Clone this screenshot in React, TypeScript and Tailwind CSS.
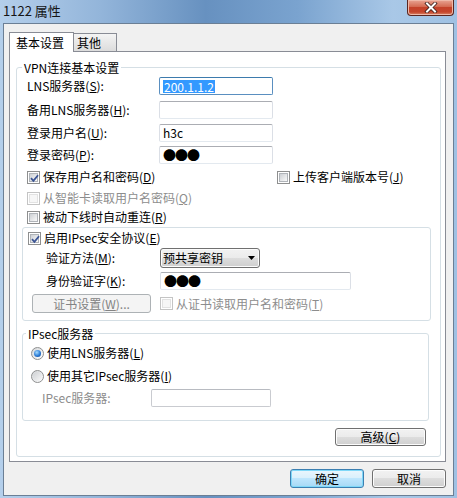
import type { ReactNode } from 'react';

const Check = ({ on = false, off = false }: { on?: boolean; off?: boolean }) => (
  <span
    className={`relative flex h-[13px] w-[13px] shrink-0 items-center justify-center border bg-white ${
      off ? 'border-[#c4c4c4]' : 'border-[#8e8f8f]'
    }`}
  >
    <span
      className={`h-[9px] w-[9px] border ${
        off
          ? 'border-[#e2e2e2] bg-[#f6f6f6]'
          : 'border-[#b0b4b9] bg-gradient-to-br from-[#cdd0d4] to-[#fafafa]'
      }`}
    />
    {on && (
      <svg className="absolute left-[1px] top-[1px]" width="11" height="11" viewBox="0 0 11 11">
        <path d="M2 5.2 L4.4 7.8 L9 2.2" fill="none" stroke="#3b5494" strokeWidth="1.8" />
      </svg>
    )}
  </span>
);

const Radio = ({ on = false }: { on?: boolean }) => (
  <span className="flex h-[13px] w-[13px] shrink-0 items-center justify-center rounded-full border border-[#8e8f8f] bg-gradient-to-br from-[#d4d6d9] to-white">
    {on ? (
      <span className="h-[7px] w-[7px] rounded-full bg-[radial-gradient(circle_at_40%_35%,#a6dcff,#2a7bd6_55%,#0d3f8c)]" />
    ) : (
      <span className="h-[9px] w-[9px] rounded-full bg-gradient-to-br from-[#cfd1d4] to-[#f8f8f8]" />
    )}
  </span>
);

const Field = ({ w, focus = false, off = false, children }: { w: string; focus?: boolean; off?: boolean; children?: ReactNode }) => (
  <div
    className={`${w} flex h-[18px] items-center rounded-[2px] border pl-[3px] ${
      focus
        ? 'border-[#5a8fc0] border-t-[#3d7bad] bg-white'
        : off
          ? 'border-[#c9cbd0] border-t-[#b8bbc1] bg-white'
          : 'border-[#dbdfe6] border-t-[#abadb3] border-b-[#e3e9ef] bg-white'
    }`}
  >
    {children}
  </div>
);

const Dots = () => <span className="text-[13px] leading-[16px] tracking-[-1px] text-black">●●●</span>;

const Btn = ({ w, off = false, main = false, children }: { w: string; off?: boolean; main?: boolean; children: ReactNode }) => (
  <div
    className={`${w} flex items-center justify-center rounded-[3px] border ${
      main
        ? 'border-[#3c7fb1] bg-[linear-gradient(#eaf6fd,#d9f0fc_50%,#bee6fd_50%,#a7d9f5)] shadow-[inset_0_0_0_1px_#7fd8f8] text-black'
        : off
          ? 'border-[#adb2b5] bg-[#f4f4f4] text-[#838383]'
          : 'border-[#707070] bg-[linear-gradient(#f2f2f2,#ebebeb_50%,#dddddd_50%,#cfcfcf)] shadow-[inset_0_0_0_1px_#fcfcfc] text-black'
    }`}
  >
    {children}
  </div>
);

const App = () => {
  return (
    <div className="flex h-[498px] w-[457px] flex-col overflow-hidden bg-[linear-gradient(90deg,#b4cfeb_0%,#93b5da_22%,#6791c0_45%,#7aa3cf_65%,#a9c8e7_86%,#9fc1e3_100%)] font-['Noto_Sans_CJK_SC','Noto_Sans',sans-serif] text-[12px] leading-[14px] text-black">
      {/* title bar */}
      <div className="flex h-[23px] shrink-0 items-start justify-between pl-[3px] pr-[3px]">
        <span className="pt-[2px] text-[13px] leading-[17px] text-[#151515]">1122 属性</span>
        <div className="flex h-[16px] w-[47px] items-center justify-center rounded-b-[4px] border border-t-0 border-[#5a2620] bg-[linear-gradient(#e8a493,#d46a52_45%,#c4422a_50%,#c5452c_80%,#d98a6c)] shadow-[inset_0_0_0_1px_#efb8a8]">
          <svg width="14" height="11" viewBox="0 0 14 11">
            <path d="M3 1.5 L11 9.5 M11 1.5 L3 9.5" stroke="#3a1d1a" strokeWidth="3.6" strokeLinecap="square" />
            <path d="M3 1.5 L11 9.5 M11 1.5 L3 9.5" stroke="#ffffff" strokeWidth="2" strokeLinecap="square" />
          </svg>
        </div>
      </div>

      {/* client area */}
      <div className="mx-[3px] flex h-[473px] flex-col border border-[#6b7f95] bg-[#f0f0f0] pl-[5px] pr-[7px] pt-[8px]">
        <div className="flex h-[20px] items-end">
          <div className="relative z-10 flex h-[20px] w-[65px] items-center border border-b-0 border-[#898c95] bg-white pl-[6px]">
            基本设置
          </div>
          <div className="flex h-[19px] w-[43px] items-center border border-l-0 border-[#898c95] bg-gradient-to-b from-[#f4f4f4] to-[#dcdcdc] pl-[3px]">
            其他
          </div>
        </div>

        <div className="-mt-px h-[411px] border border-[#898c95] bg-white pl-[6px] pr-[4px] pt-[8px]">
          <fieldset className="rounded-[3px] border border-[#d5dfe5] pb-[10px]">
            <legend className="ml-[5px] px-[2px] leading-[15px]">VPN连接基本设置</legend>

            <div className="pl-[10px]">
              <div className="mt-[2px] flex items-center">
                <span className="w-[132px]">LNS服务器(<u>S</u>):</span>
                <Field w="w-[114px]" focus>
                  <span className="bg-[#3399ff] px-[1px] leading-[13px] text-white">200.1.1.2</span>
                </Field>
              </div>
              <div className="mt-[6px] flex items-center">
                <span className="w-[132px]">备用LNS服务器(<u>H</u>):</span>
                <Field w="w-[114px]" />
              </div>
              <div className="mt-[5px] flex items-center">
                <span className="w-[132px]">登录用户名(<u>U</u>):</span>
                <Field w="w-[114px]">h3c</Field>
              </div>
              <div className="mt-[4px] flex items-center">
                <span className="w-[132px]">登录密码(<u>P</u>):</span>
                <Field w="w-[114px]">
                  <Dots />
                </Field>
              </div>

              <div className="mt-[6px] flex h-[14px] items-center">
                <div className="flex w-[250px] items-center gap-[3px]">
                  <Check on />
                  <span>保存用户名和密码(<u>D</u>)</span>
                </div>
                <div className="flex items-center gap-[3px]">
                  <Check />
                  <span>上传客户端版本号(<u>J</u>)</span>
                </div>
              </div>
              <div className="mt-[7px] flex h-[14px] items-center gap-[3px] text-[#8d8d8d]">
                <Check off />
                <span>从智能卡读取用户名密码(<u>Q</u>)</span>
              </div>
              <div className="mt-[5px] flex h-[14px] items-center gap-[3px]">
                <Check />
                <span>被动下线时自动重连(<u>R</u>)</span>
              </div>
            </div>

            {/* IPsec box */}
            <div className="ml-[5px] mt-[3px] w-[409px] rounded-[3px] border border-[#d5dfe5] pb-[7px]">
              <div className="ml-[5px] mt-[3px] flex h-[14px] items-center gap-[3px]">
                <Check on />
                <span>启用IPsec安全协议(<u>E</u>)</span>
              </div>
              <div className="mt-[3px] flex items-center pl-[23px]">
                <span className="w-[114px]">验证方法(<u>M</u>):</span>
                <div className="flex h-[20px] w-[100px] items-center justify-between rounded-[3px] border border-[#707070] bg-[linear-gradient(#f2f2f2,#ebebeb_50%,#dddddd_50%,#cfcfcf)] pl-[2px] pr-[4px] shadow-[inset_0_0_0_1px_#fcfcfc]">
                  <span>预共享密钥</span>
                  <svg width="7" height="4" viewBox="0 0 7 4">
                    <path d="M0 0 H7 L3.5 4 Z" fill="#000" />
                  </svg>
                </div>
              </div>
              <div className="mt-[4px] flex items-center pl-[23px]">
                <span className="w-[114px]">身份验证字(<u>K</u>):</span>
                <Field w="w-[191px]">
                  <Dots />
                </Field>
              </div>
              <div className="mt-[4px] flex items-center pl-[9px]">
                <Btn w="h-[19px] w-[119px]" off>
                  证书设置(<u>W</u>)...
                </Btn>
                <div className="ml-[9px] flex items-center gap-[3px] text-[#8d8d8d]">
                  <Check off />
                  <span>从证书读取用户名和密码(<u>T</u>)</span>
                </div>
              </div>
            </div>

            {/* IPsec server */}
            <fieldset className="ml-[5px] mt-[5px] w-[407px] rounded-[3px] border border-[#d5dfe5] pb-[13px]">
              <legend className="ml-[3px] px-[2px] leading-[15px]">IPsec服务器</legend>
              <div className="ml-[8px] mt-[5px] flex h-[14px] items-center gap-[3px]">
                <Radio on />
                <span>使用LNS服务器(<u>L</u>)</span>
              </div>
              <div className="ml-[8px] mt-[9px] flex h-[14px] items-center gap-[3px]">
                <Radio />
                <span>使用其它IPsec服务器(<u>I</u>)</span>
              </div>
              <div className="mt-[6px] flex items-center pl-[19px]">
                <span className="w-[109px] text-[#8d8d8d]">IPsec服务器:</span>
                <Field w="w-[120px]" off />
              </div>
            </fieldset>

            <div className="mt-[7px] flex justify-end pr-[14px]">
              <Btn w="h-[18px] w-[91px]">
                高级(<u>C</u>)
              </Btn>
            </div>
          </fieldset>
        </div>

        <div className="mt-[7px] flex justify-end gap-[8px] pr-[-1px]">
          <Btn w="h-[19px] w-[74px]" main>
            确定
          </Btn>
          <Btn w="h-[19px] w-[74px]">取消</Btn>
        </div>
      </div>
    </div>
  );
};

export default App;
